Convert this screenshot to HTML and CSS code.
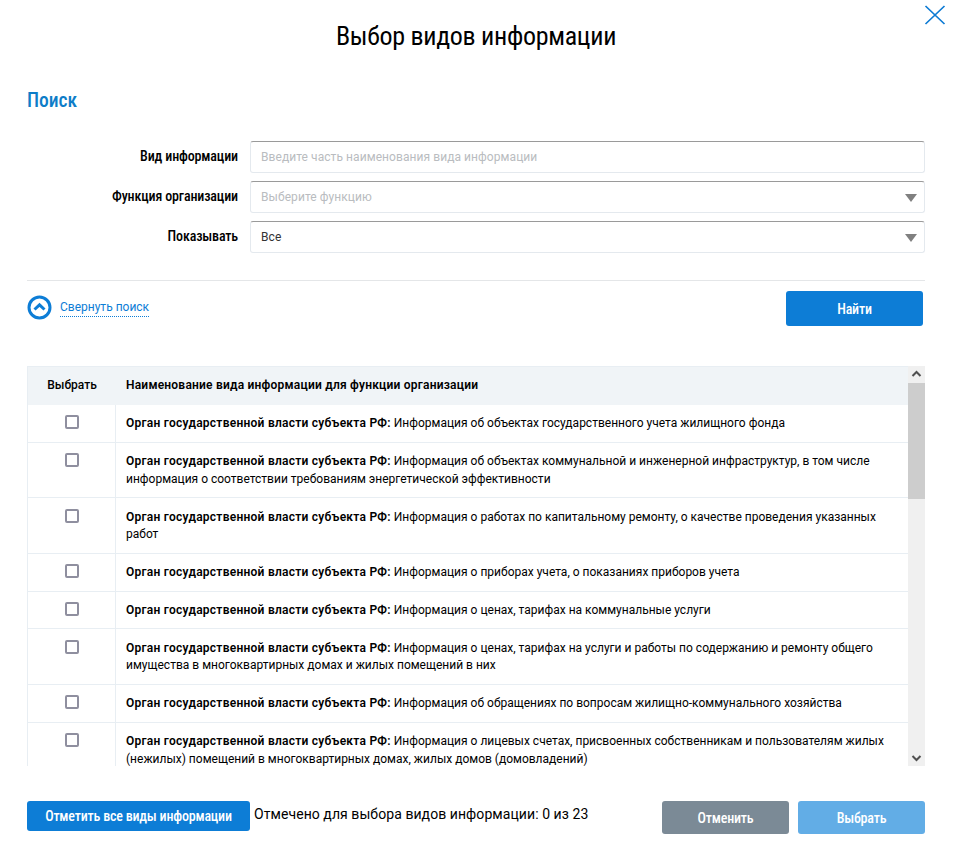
FILE: index.html
```html
<!DOCTYPE html>
<html lang="ru">
<head>
  <meta charset="UTF-8">
  <meta name="viewport" content="width=device-width, initial-scale=1.0">
  <title>Выбор видов информации</title>
  <link rel="stylesheet" href="styles.css">
</head>
<body>
  <div class="modal">
    <button class="close-btn" aria-label="Закрыть">
      <svg width="22" height="20" viewBox="0 0 22 20"><path d="M1.5 1L20.5 19M20.5 1L1.5 19" fill="none" stroke="#0d7bd4" stroke-width="1.7"/></svg>
    </button>
    <h1 class="modal-title">Выбор видов информации</h1>
    <h2 class="section-title">Поиск</h2>

    <div class="search-form">
      <div class="form-row">
        <label class="form-label">Вид информации</label>
        <div class="field placeholder">Введите часть наименования вида информации</div>
      </div>
      <div class="form-row">
        <label class="form-label">Функция организации</label>
        <div class="field placeholder">Выберите функцию<span class="arrow"></span></div>
      </div>
      <div class="form-row">
        <label class="form-label">Показывать</label>
        <div class="field">Все<span class="arrow"></span></div>
      </div>
    </div>

    <div class="search-footer">
      <a class="collapse-link">
        <svg width="25" height="25" viewBox="0 0 25 25"><circle cx="12.5" cy="12.5" r="10.5" fill="none" stroke="#0d7dd6" stroke-width="3"/><path d="M7.5 14.5L12.5 9.8L17.5 14.5" fill="none" stroke="#0d7dd6" stroke-width="3"/></svg>
        <span class="collapse-text">Свернуть поиск</span>
      </a>
      <button class="btn btn-find">Найти</button>
    </div>

    <div class="list-box">
      <div class="list">
        <div class="list-head">
          <div class="col-check">Выбрать</div>
          <div class="col-name">Наименование вида информации для функции организации</div>
        </div>
        <div class="list-row">
          <div class="col-check"><span class="checkbox"></span></div>
          <div class="col-name"><b>Орган государственной власти субъекта РФ:</b> Информация об объектах государственного учета жилищного фонда</div>
        </div>
        <div class="list-row">
          <div class="col-check"><span class="checkbox"></span></div>
          <div class="col-name"><b>Орган государственной власти субъекта РФ:</b> Информация об объектах коммунальной и инженерной инфраструктур, в том числе информация о соответствии требованиям энергетической эффективности</div>
        </div>
        <div class="list-row">
          <div class="col-check"><span class="checkbox"></span></div>
          <div class="col-name"><b>Орган государственной власти субъекта РФ:</b> Информация о работах по капитальному ремонту, о качестве проведения указанных работ</div>
        </div>
        <div class="list-row">
          <div class="col-check"><span class="checkbox"></span></div>
          <div class="col-name"><b>Орган государственной власти субъекта РФ:</b> Информация о приборах учета, о показаниях приборов учета</div>
        </div>
        <div class="list-row">
          <div class="col-check"><span class="checkbox"></span></div>
          <div class="col-name"><b>Орган государственной власти субъекта РФ:</b> Информация о ценах, тарифах на коммунальные услуги</div>
        </div>
        <div class="list-row">
          <div class="col-check"><span class="checkbox"></span></div>
          <div class="col-name"><b>Орган государственной власти субъекта РФ:</b> Информация о ценах, тарифах на услуги и работы по содержанию и ремонту общего имущества в многоквартирных домах и жилых помещений в них</div>
        </div>
        <div class="list-row">
          <div class="col-check"><span class="checkbox"></span></div>
          <div class="col-name"><b>Орган государственной власти субъекта РФ:</b> Информация об обращениях по вопросам жилищно-коммунального хозяйства</div>
        </div>
        <div class="list-row">
          <div class="col-check"><span class="checkbox"></span></div>
          <div class="col-name"><b>Орган государственной власти субъекта РФ:</b> Информация о лицевых счетах, присвоенных собственникам и пользователям жилых (нежилых) помещений в многоквартирных домах, жилых домов (домовладений)</div>
        </div>
      </div>
      <div class="scrollbar">
        <svg class="scroll-btn" width="17" height="17" viewBox="0 0 17 17"><path d="M4.5 10L8.5 6L12.5 10" fill="none" stroke="#505050" stroke-width="2"/></svg>
        <div class="scroll-track"><div class="scroll-thumb"></div></div>
        <svg class="scroll-btn" width="17" height="17" viewBox="0 0 17 17"><path d="M4.5 7L8.5 11L12.5 7" fill="none" stroke="#505050" stroke-width="2"/></svg>
      </div>
    </div>

    <div class="modal-footer">
      <button class="btn btn-all">Отметить все виды информации</button>
      <span class="counter">Отмечено для выбора видов информации: 0 из 23</span>
      <div class="footer-actions">
        <button class="btn btn-cancel">Отменить</button>
        <button class="btn btn-select">Выбрать</button>
      </div>
    </div>
  </div>
</body>
</html>
```
FILE: styles.css
```css
body {
  margin: 0;
  background: white;
  font-family: Roboto, Arial, sans-serif;
  color: #000;
}
.modal {
  position: relative;
  width: 953px;
  height: 847px;
  box-sizing: border-box;
  padding: 0 28px 0 27px;
  overflow: hidden;
}
.close-btn {
  position: absolute;
  top: 5px;
  right: 7px;
  padding: 0;
  border: none;
  background: none;
  line-height: 0;
}
.modal-title {
  margin: 0;
  padding-top: 20px;
  height: 58px;
  font-size: 26px;
  line-height: 32px;
  font-weight: 400;
  font-stretch: 80%;
  letter-spacing: -0.3px;
  text-align: center;
}
.section-title {
  margin: 0;
  padding-top: 12px;
  font-size: 19.5px;
  line-height: 22px;
  font-weight: 500;
  font-stretch: 85%;
  color: #0d7dc8;
}
.search-form {
  padding-top: 29px;
}
.form-row {
  display: flex;
  align-items: center;
  margin-bottom: 8px;
}
.form-label {
  width: 223px;
  padding: 0 12px 2px 0;
  box-sizing: border-box;
  text-align: right;
  font-size: 14px;
  font-weight: 500;
  font-stretch: 80%;
  letter-spacing: -0.15px;
}
.field {
  position: relative;
  flex: 1;
  height: 32px;
  box-sizing: border-box;
  padding-left: 10px;
  border: 1px solid #e4e9ee;
  border-top: 1px solid #9a9a9a;
  border-radius: 3px;
  font-size: 12px;
  letter-spacing: 0.07px;
  line-height: 30px;
  color: #333;
}
.field.placeholder {
  color: #b9bcc0;
}
.arrow {
  position: absolute;
  right: 7px;
  top: 12px;
  border-left: 6px solid transparent;
  border-right: 6px solid transparent;
  border-top: 8px solid #808080;
}
.search-footer {
  display: flex;
  justify-content: space-between;
  align-items: flex-start;
  margin-top: 27px;
  padding: 10px 2px 0 0;
  border-top: 1px solid #e4e6e8;
}
.collapse-link {
  display: flex;
  align-items: center;
  gap: 8px;
  margin-top: 4px;
  line-height: 0;
}
.collapse-text {
  border-bottom: 1px dotted #0d7dd6;
  font-size: 12px;
  line-height: 17px;
  color: #0d7dd6;
}
.btn {
  height: 35px;
  padding: 0;
  border: none;
  border-radius: 3px;
  font-family: Roboto, Arial, sans-serif;
  font-size: 14px;
  font-weight: 500;
  font-stretch: 80%;
  letter-spacing: -0.2px;
  color: white;
  background: #0d7dd6;
}
.btn-find {
  width: 137px;
}
.list-box {
  display: flex;
  height: 400px;
  margin-top: 40px;
  overflow: hidden;
}
.list {
  flex: 1;
  min-width: 0;
  border-left: 1px solid #e8eef3;
}
.list-head {
  display: flex;
  align-items: center;
  height: 39px;
  box-sizing: border-box;
  padding-bottom: 2px;
  border-top: 1px solid #e8eef3;
  background: #f0f4f7;
  font-size: 12px;
  font-weight: 600;
  letter-spacing: 0.21px;
}
.list-head .col-check {
  padding-top: 0;
  border-right: none;
  font-weight: 500;
  letter-spacing: 0;
}
.list-head .col-name {
  padding: 0 0 0 10px;
}
.list-row {
  display: flex;
  border-bottom: 1px solid #e8eef3;
  font-size: 12px;
  line-height: 17.5px;
}
.col-check {
  flex: none;
  width: 88px;
  box-sizing: border-box;
  border-right: 1px solid #e8eef3;
  text-align: center;
}
.col-name {
  flex: 1;
  padding: 10.3px 10px 9.1px 10px;
}
.col-name b {
  font-weight: 600;
  letter-spacing: 0.25px;
}
.list-row .col-check {
  padding-top: 10.3px;
}
.checkbox {
  display: block;
  width: 14px;
  height: 14px;
  box-sizing: border-box;
  margin: 0 auto;
  border: 2px solid #8f8f9f;
  border-radius: 2px;
}
.scrollbar {
  flex: none;
  display: flex;
  flex-direction: column;
  width: 17px;
  background: #f0f0f0;
}
.scroll-btn {
  flex: none;
}
.scroll-track {
  flex: 1;
}
.scroll-thumb {
  height: 116px;
  background: #cdcdcd;
}
.modal-footer {
  display: flex;
  align-items: flex-start;
  padding-top: 35px;
}
.btn-all {
  width: 223px;
  height: 30px;
}
.counter {
  margin-left: 4px;
  font-size: 14px;
  letter-spacing: 0.07px;
  line-height: 26px;
}
.footer-actions {
  display: flex;
  gap: 9px;
  margin-left: auto;
}
.btn-cancel {
  width: 127px;
  height: 33px;
  background: #7b8a96;
}
.btn-select {
  width: 127px;
  height: 33px;
  background: #62ade6;
}
```
